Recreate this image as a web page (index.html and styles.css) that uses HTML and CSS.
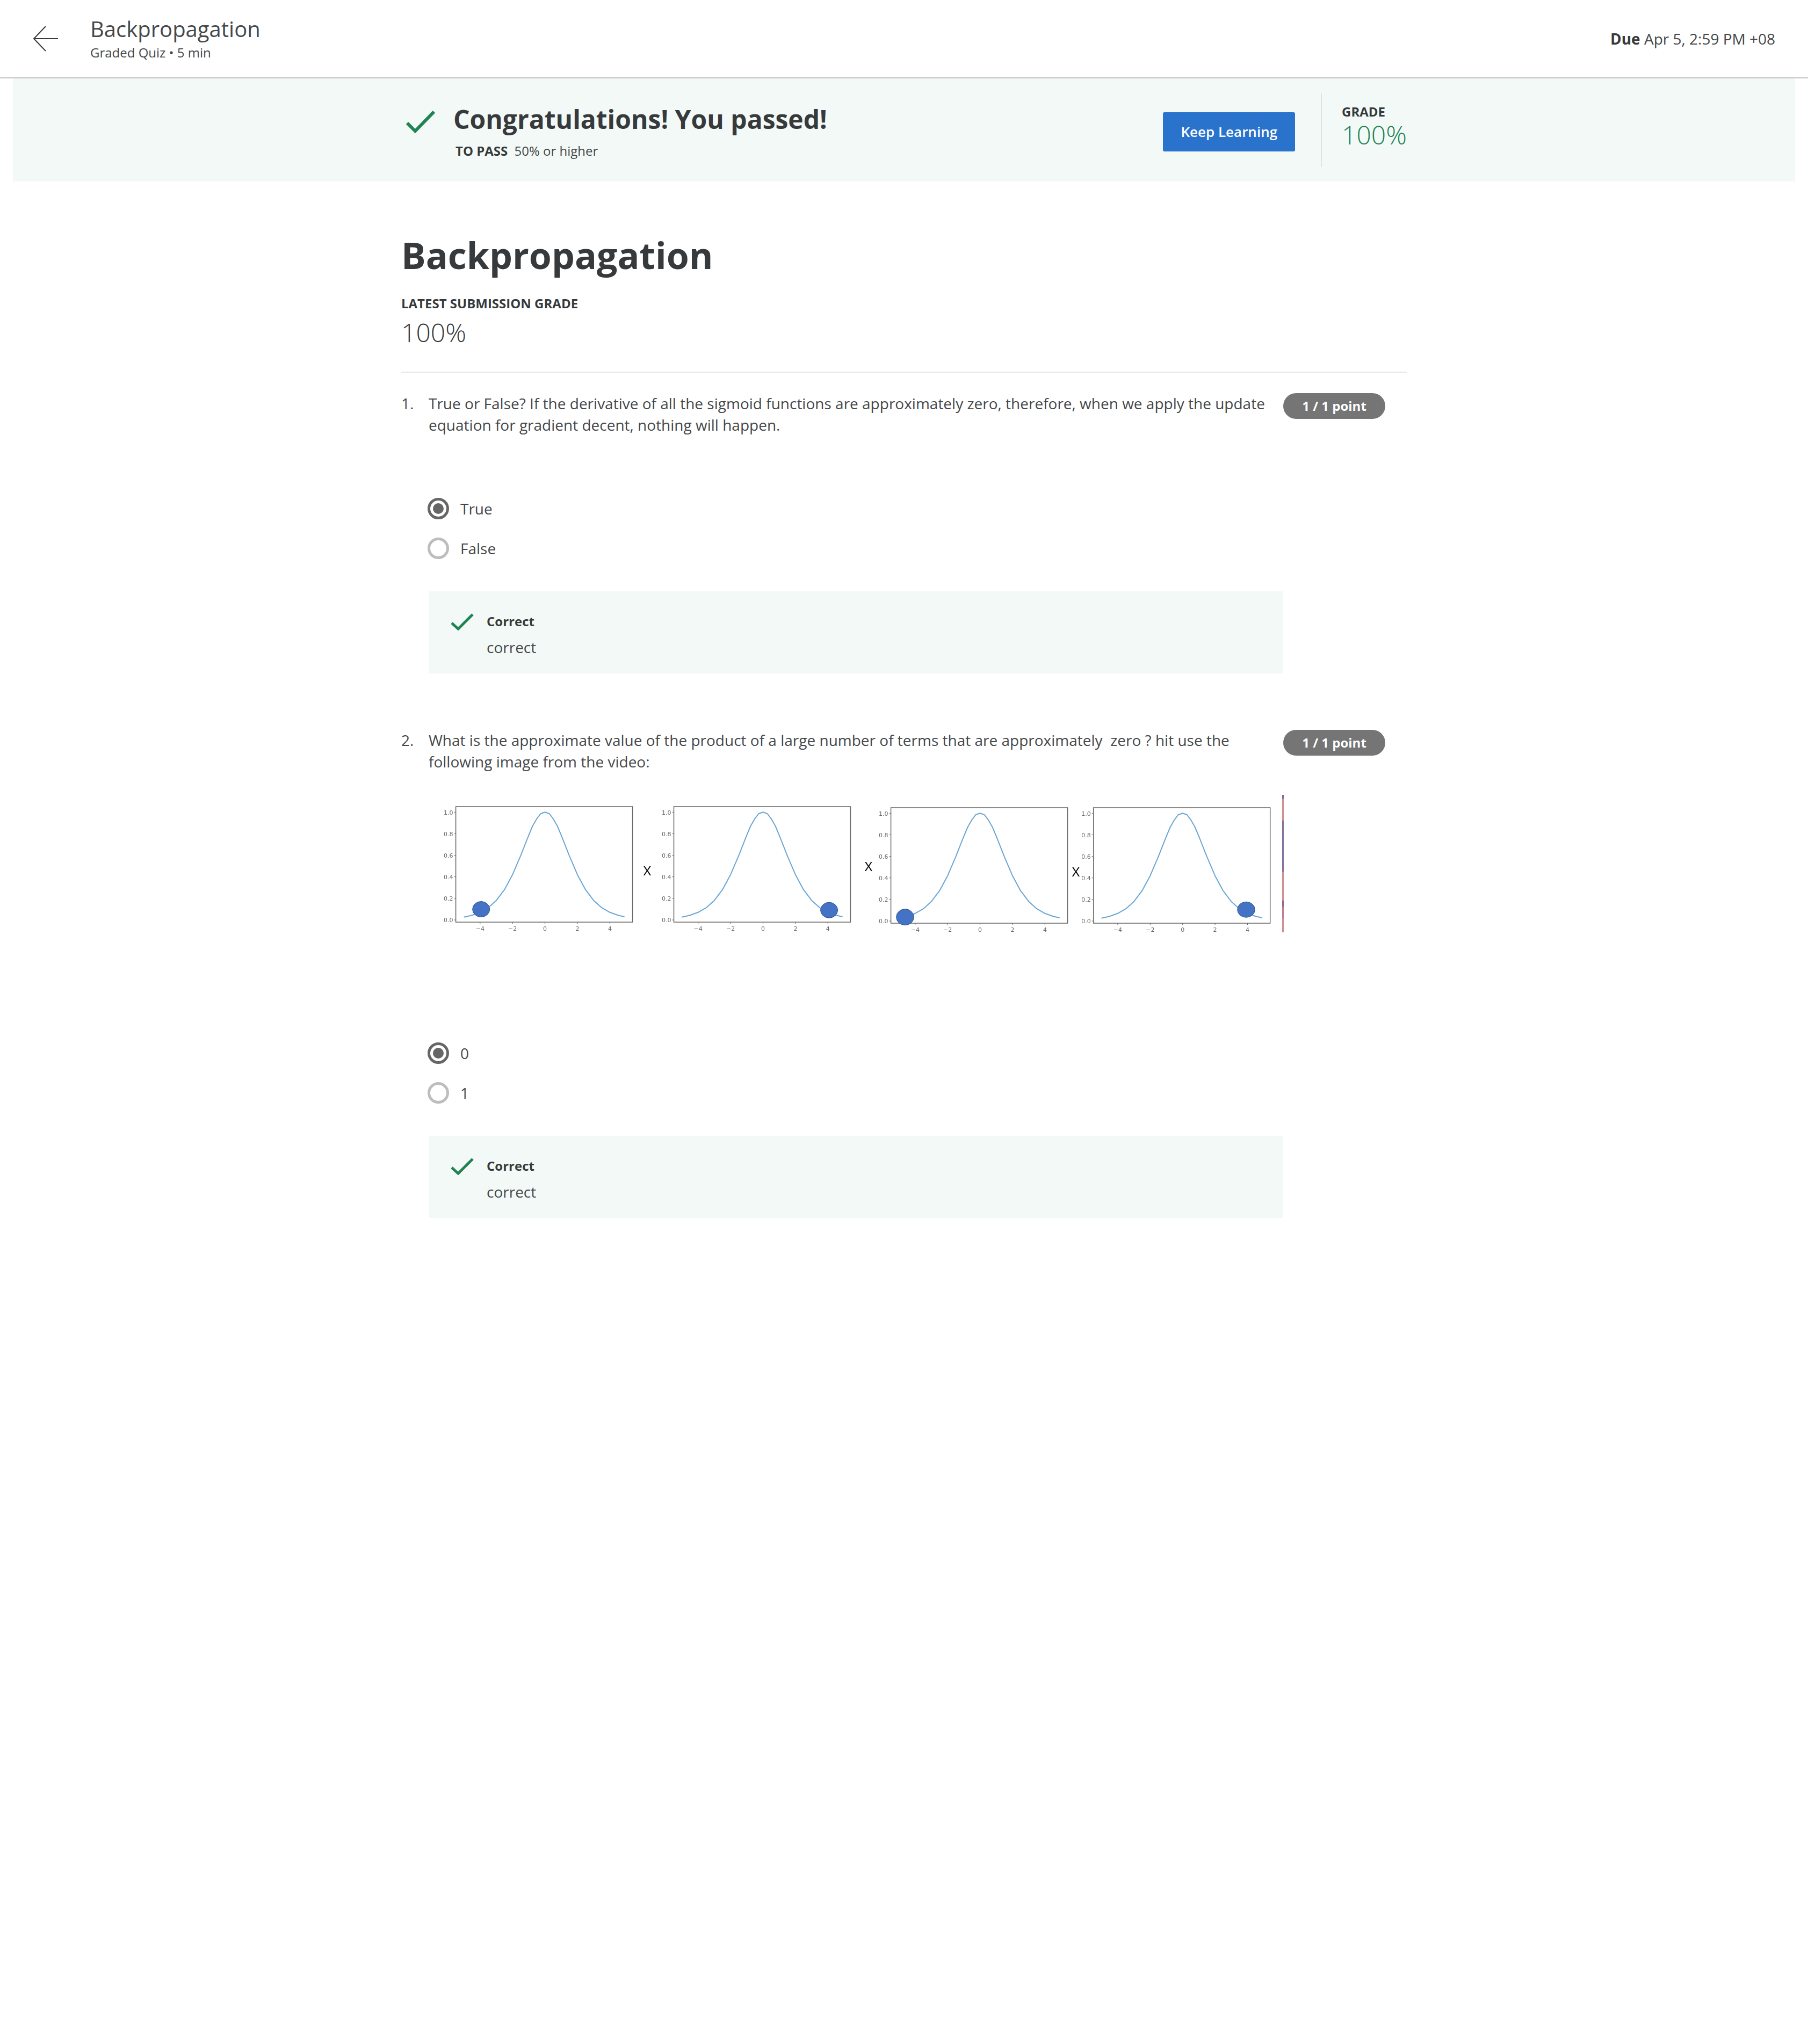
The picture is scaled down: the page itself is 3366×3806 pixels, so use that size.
FILE: index.html
```html
<!DOCTYPE html>
<html lang="en">
  <head>
    <meta http-equiv="Content-Type" content="text/html;charset=UTF-8" />
    <title>Backpropagation</title>
    <link rel="stylesheet" href="styles.css">
  </head>
  <body>
    <header class="topBar">
      <svg class="backArrow" width="48" height="48" viewBox="0 0 48 48">
        <path d="M47 24H2M24 1 2 24l22 23" fill="none" stroke="#373a3c" stroke-width="2" />
      </svg>
      <div class="topTitle">
        <div class="topName">Backpropagation</div>
        <div class="topMeta">Graded Quiz • 5 min</div>
      </div>
      <div class="dueDate"><b>Due</b> Apr 5, 2:59 PM +08</div>
    </header>

    <section class="passBanner">
      <div class="passInner">
        <svg class="passCheck" width="54" height="42" viewBox="0 0 54 42">
          <polyline points="2,23 17,38 52,2" fill="none" stroke="#1f8354" stroke-width="6" />
        </svg>
        <div class="passText">
          <h2>Congratulations! You passed!</h2>
          <p><b>TO PASS</b> 50% or higher</p>
        </div>
        <a class="keepButton">Keep Learning</a>
        <div class="bannerGrade">
          <div class="gradeLabel">GRADE</div>
          <div class="gradeValue">100%</div>
        </div>
      </div>
    </section>

    <main class="quiz">
      <h1>Backpropagation</h1>
      <div class="gradeLabel latest">LATEST SUBMISSION GRADE</div>
      <div class="latestValue">100%</div>

      <section class="question first">
        <div class="questionHead">
          <span class="questionNum">1.</span>
          <p>True or False? If the derivative of all the sigmoid functions are approximately zero, therefore, when we apply the update equation for gradient decent, nothing will happen.</p>
          <span class="points">1 / 1 point</span>
        </div>
        <div class="options optionsFirst">
          <div class="option"><span class="radio checked"></span>True</div>
          <div class="option"><span class="radio"></span>False</div>
        </div>
        <div class="feedback">
          <svg class="feedbackCheck" width="42" height="32" viewBox="0 0 42 32">
            <polyline points="1,18 13,29 40,2" fill="none" stroke="#1f8354" stroke-width="5" />
          </svg>
          <div>
            <div class="feedbackTitle">Correct</div>
            <div class="feedbackBody">correct</div>
          </div>
        </div>
      </section>

      <section class="question second">
        <div class="questionHead">
          <span class="questionNum">2.</span>
          <p>What is the approximate value of the product of a large number of terms that are approximately&nbsp; zero ? hit use the following image from the video:</p>
          <span class="points">1 / 1 point</span>
        </div>
        <svg class="plots" width="1600" height="260" viewBox="0 0 1600 260">
          <defs>
            <g id="plot">
              <rect x="0" y="0" width="329" height="215" fill="#fff" stroke="#666" stroke-width="1.5" />
              <polyline class="curve" points="15,205.7 30.1,202.2 45.2,196.8 60.3,188.2 75.4,174.7 90.5,154.7 105.6,126.7 120.7,91.3 135.8,53.2 143,36 150.9,22.3 158,13 166,10.3 174,13 181.1,22.3 189,36 196.2,53.2 211.3,91.3 226.4,126.7 241.5,154.7 256.6,174.7 271.7,188.2 286.8,196.8 301.9,202.2 314,205" />
              <path d="M-3 10.3H0M-3 50.4H0M-3 90.6H0M-3 130.7H0M-3 170.9H0M-3 211H0M45.2 215v3M105.6 215v3M166 215v3M226.4 215v3M286.8 215v3" stroke="#666" stroke-width="1" />
              <g class="ticks">
                <text x="-5" y="14.5" text-anchor="end">1.0</text>
                <text x="-5" y="54.5" text-anchor="end">0.8</text>
                <text x="-5" y="94.5" text-anchor="end">0.6</text>
                <text x="-5" y="134.5" text-anchor="end">0.4</text>
                <text x="-5" y="175" text-anchor="end">0.2</text>
                <text x="-5" y="215" text-anchor="end">0.0</text>
                <text x="45.2" y="231" text-anchor="middle">−4</text>
                <text x="105.6" y="231" text-anchor="middle">−2</text>
                <text x="166" y="231" text-anchor="middle">0</text>
                <text x="226.4" y="231" text-anchor="middle">2</text>
                <text x="286.8" y="231" text-anchor="middle">4</text>
              </g>
            </g>
          </defs>
          <use href="#plot" x="48.6" y="22" />
          <use href="#plot" x="454.5" y="22" />
          <use href="#plot" x="858.6" y="24" />
          <use href="#plot" x="1235.7" y="24" />
          <ellipse class="dot" cx="95.7" cy="213" rx="16" ry="14.5" />
          <ellipse class="dot" cx="743.6" cy="214.7" rx="16" ry="14.5" />
          <ellipse class="dot" cx="885" cy="227.7" rx="16.3" ry="15" />
          <ellipse class="dot" cx="1520" cy="213.7" rx="16.3" ry="14.5" />
          <text class="times" x="405" y="150" text-anchor="middle">X</text>
          <text class="times" x="817" y="142" text-anchor="middle">X</text>
          <text class="times" x="1203" y="152" text-anchor="middle">X</text>
          <rect x="1587" y="0" width="3" height="256" fill="#cf8f92" />
          <rect x="1587" y="0" width="3" height="7" fill="#7a6a9a" />
          <rect x="1587" y="48" width="3" height="95" fill="#85719f" />
          <rect x="1587" y="197" width="3" height="11" fill="#8a6a90" />
          <rect x="1587" y="208" width="3" height="22" fill="#b97f92" />
        </svg>
        <div class="options optionsSecond">
          <div class="option"><span class="radio checked"></span>0</div>
          <div class="option"><span class="radio"></span>1</div>
        </div>
        <div class="feedback">
          <svg class="feedbackCheck" width="42" height="32" viewBox="0 0 42 32">
            <polyline points="1,18 13,29 40,2" fill="none" stroke="#1f8354" stroke-width="5" />
          </svg>
          <div>
            <div class="feedbackTitle">Correct</div>
            <div class="feedbackBody">correct</div>
          </div>
        </div>
      </section>
    </main>
  </body>
</html>
```

FILE: styles.css
```css
/* Halaman */
body {
  margin: 0;
  min-height: 3806px;
  background-color: #fff;
  color: #45484a;
  font-family: "Open Sans", Arial, sans-serif;
  font-size: 28px;
  line-height: 40px;
}

b,
h1,
h2,
.gradeLabel,
.feedbackTitle {
  color: #373a3c;
}

/* Header atas */
.topBar {
  display: flex;
  align-items: center;
  height: 144px;
  padding: 0 61px;
  border-bottom: 2px solid #c4c4c4;
}

.backArrow {
  margin-right: 59px;
}

.topTitle {
  flex: 1;
  padding-bottom: 3px;
}

.topName {
  font-size: 40px;
  line-height: 50px;
}

.topMeta {
  margin-top: 4px;
  font-size: 24px;
  line-height: 30px;
}

.dueDate b {
  font-weight: 700;
}

/* Banner lulus */
.passBanner {
  height: 192px;
  margin: 0 24px;
  background-color: #f3f9f6;
}

.passInner {
  display: flex;
  align-items: flex-start;
  width: 1872px;
  height: 100%;
  margin: 0 auto;
}

.passCheck {
  margin: 60px 34px 0 9px;
}

.passText h2 {
  margin: 46px 0 0;
  font-size: 48px;
  font-weight: 700;
  line-height: 60px;
}

.passText p {
  margin: 11px 0 0 4px;
  font-size: 24px;
  line-height: 36px;
}

.passText b {
  margin-right: 6px;
  font-weight: 700;
}

.keepButton {
  margin: 63px 0 0 auto;
  padding: 0 33px;
  color: #fff;
  background-color: #2a73cc;
  border-radius: 3px;
  font-size: 26px;
  font-weight: 600;
  line-height: 73px;
}

.bannerGrade {
  align-self: flex-start;
  height: 138px;
  margin: 27px 0 0 48px;
  padding: 18px 0 0 37px;
  border-left: 2px solid #e0e5e3;
  box-sizing: border-box;
}

.gradeLabel {
  font-size: 24px;
  font-weight: 700;
  line-height: 34px;
}

.gradeValue {
  color: #1f8354;
  font-size: 48px;
  font-weight: 350;
  line-height: 52px;
}

/* Isi kuis */
.quiz {
  width: 1872px;
  margin: 0 auto;
}

h1 {
  margin: 92px 0 0;
  font-size: 68px;
  font-weight: 700;
  line-height: 90px;
}

.latest {
  margin-top: 28px;
}

.latestValue {
  margin-top: 6px;
  padding-bottom: 42px;
  border-bottom: 2px solid #e8e8e8;
  color: #373a3c;
  font-size: 48px;
  font-weight: 350;
  line-height: 62px;
}

.question.first {
  margin-top: 37px;
}

.question.second {
  margin-top: 104px;
}

.questionHead {
  display: flex;
  align-items: flex-start;
  width: 1832px;
}

.questionNum {
  width: 51px;
  flex-shrink: 0;
}

.questionHead p {
  flex: 1;
  margin: 0;
}

.points {
  flex-shrink: 0;
  width: 190px;
  height: 48px;
  margin: 1px 0 0 34px;
  color: #fff;
  background-color: #757575;
  border-radius: 24px;
  font-size: 24px;
  font-weight: 700;
  line-height: 48px;
  text-align: center;
}

.plots {
  display: block;
  margin: 42px 0 0 53px;
  filter: blur(0.4px);
}

.curve {
  fill: none;
  stroke: #6aa6d3;
  stroke-width: 2;
  stroke-linejoin: round;
}

.ticks text {
  font-family: "DejaVu Sans", sans-serif;
  font-size: 11px;
  fill: #666;
}

.dot {
  fill: #4472c4;
  stroke: #2f528f;
  stroke-width: 1;
}

.times {
  font-family: "Liberation Sans", sans-serif;
  font-size: 23px;
  fill: #000;
}

/* Pilihan jawaban */
.options {
  margin-left: 49px;
}

.optionsFirst {
  margin-top: 116px;
}

.optionsSecond {
  margin-top: 201px;
}

.option {
  display: flex;
  align-items: center;
  height: 40px;
  margin-bottom: 34px;
}

.radio {
  position: relative;
  width: 40px;
  height: 40px;
  margin-right: 21px;
  border: 5px solid #bdbdbd;
  border-radius: 50%;
  box-sizing: border-box;
}

.radio.checked {
  border-color: #666;
}

.radio.checked::after {
  content: "";
  position: absolute;
  top: 5px;
  left: 5px;
  width: 20px;
  height: 20px;
  background-color: #666;
  border-radius: 50%;
}

/* Kotak feedback */
.feedback {
  display: flex;
  align-items: flex-start;
  width: 1590px;
  height: 153px;
  margin: 60px 0 0 51px;
  padding: 41px 0 0 42px;
  background-color: #f3f9f6;
  box-sizing: border-box;
}

.feedbackCheck {
  margin-right: 24px;
}

.feedbackTitle {
  font-size: 24px;
  font-weight: 700;
  line-height: 30px;
}

.feedbackBody {
  margin-top: 13px;
}
```
